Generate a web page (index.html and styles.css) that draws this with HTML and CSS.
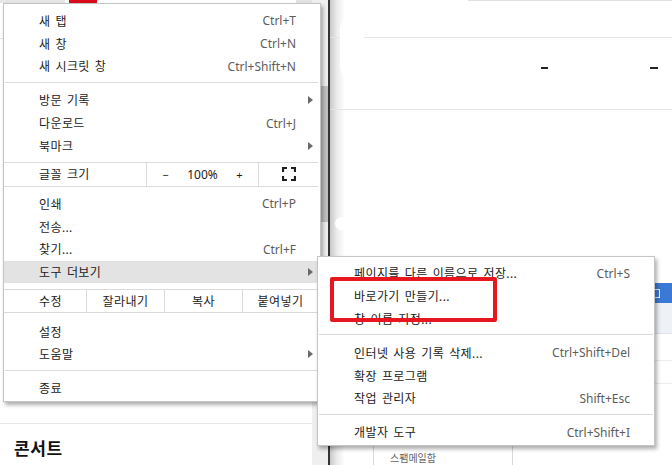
FILE: index.html
```html
<!DOCTYPE html>
<html lang="ko">
<head>
<meta charset="utf-8">
<title>Chrome menu</title>
<link rel="stylesheet" href="styles.css">
</head>
<body>
<div class="page">
  <div class="left">
    <div class="tabbar"><span class="tb-gray"></span><span class="tb-red"></span><span class="tb-gray2"></span></div>
    <div class="lhead"></div>
    <div class="lbody"></div>
    <div class="lsection"><h2 class="concert">콘서트</h2></div>
  </div>
  <div class="scrollcol"><div class="thumb"></div></div>
  <div class="divider"></div>
  <div class="right">
    <div class="blob blob1"></div>
    <div class="blob blob2"></div>
    <div class="rhead"><div class="topline"></div></div>
    <div class="rband"><span class="mark m1"></span><span class="mark m2"></span></div>
    <div class="rmid">
      <div class="bluerow"><div class="bluebtn"><span class="btnglyph"></span></div></div>
      <div class="lightrow"></div>
      <div class="trow t1"></div>
      <div class="trow t2"></div>
    </div>
    <div class="rfoot"><div class="fcell">스팸메일함</div></div>
  </div>
</div>

<div class="menu main">
  <div class="item"><span class="label">새 탭</span><span class="key">Ctrl+T</span><span class="arr"></span></div>
  <div class="item"><span class="label">새 창</span><span class="key">Ctrl+N</span><span class="arr"></span></div>
  <div class="item"><span class="label">새 시크릿 창</span><span class="key">Ctrl+Shift+N</span><span class="arr"></span></div>
  <div class="sep"></div>
  <div class="item"><span class="label">방문 기록</span><span class="arr on"></span></div>
  <div class="item"><span class="label">다운로드</span><span class="key">Ctrl+J</span><span class="arr"></span></div>
  <div class="item"><span class="label">북마크</span><span class="arr on"></span></div>
  <div class="zoomrow">
    <div class="zc zlab">글꼴 크기</div>
    <div class="zc zctl"><span class="zb">−</span><span class="zpct">100%</span><span class="zb">+</span></div>
    <div class="zc zfs">
      <svg width="14" height="14" viewBox="0 0 14 14"><path d="M1 5V1H5M9 1H13V5M13 9V13H9M5 13H1V9" fill="none" stroke="#1e1e1e" stroke-width="2.2"/></svg>
    </div>
  </div>
  <div class="item"><span class="label">인쇄</span><span class="key">Ctrl+P</span><span class="arr"></span></div>
  <div class="item"><span class="label">전송...</span><span class="arr"></span></div>
  <div class="item"><span class="label">찾기...</span><span class="key">Ctrl+F</span><span class="arr"></span></div>
  <div class="item hl"><span class="label">도구 더보기</span><span class="arr on"></span></div>
  <div class="editrow">
    <div class="ec elab">수정</div>
    <div class="ec">잘라내기</div>
    <div class="ec">복사</div>
    <div class="ec">붙여넣기</div>
  </div>
  <div class="item"><span class="label">설정</span><span class="arr"></span></div>
  <div class="item"><span class="label">도움말</span><span class="arr on"></span></div>
  <div class="sep"></div>
  <div class="item"><span class="label">종료</span><span class="arr"></span></div>
</div>

<div class="menu sub">
  <div class="item"><span class="label">페이지를 다른 이름으로 저장...</span><span class="key">Ctrl+S</span><span class="arr"></span></div>
  <div class="item"><span class="label">바로가기 만들기...</span><span class="arr"></span></div>
  <div class="item"><span class="label">창 이름 지정...</span><span class="arr"></span></div>
  <div class="sep"></div>
  <div class="item"><span class="label">인터넷 사용 기록 삭제...</span><span class="key">Ctrl+Shift+Del</span><span class="arr"></span></div>
  <div class="item"><span class="label">확장 프로그램</span><span class="arr"></span></div>
  <div class="item"><span class="label">작업 관리자</span><span class="key">Shift+Esc</span><span class="arr"></span></div>
  <div class="sep"></div>
  <div class="item"><span class="label">개발자 도구</span><span class="key">Ctrl+Shift+I</span><span class="arr"></span></div>
</div>

<div class="annot"></div>
</body>
</html>
```

FILE: styles.css
```css
html, body {
  margin: 0;
  padding: 0;
  background: #fff;
}

body {
  width: 672px;
  height: 465px;
  overflow: hidden;
  position: relative;
  font-family: "Noto Sans", "Noto Sans CJK KR", sans-serif;
}

.page {
  display: flex;
  width: 672px;
  height: 465px;
}

/* left page area */
.left {
  width: 312px;
  display: flex;
  flex-direction: column;
}

.tabbar {
  height: 3px;
  display: flex;
}

.tb-gray {
  width: 65px;
  background: #e6e6e6;
}

.tb-red {
  width: 28px;
  margin-left: 4px;
  background: #d90a1c;
}

.tb-gray2 {
  width: 16px;
  margin-left: auto;
  background: #e2e2e2;
}

.lhead {
  height: 35px;
  border-bottom: 1px solid #e3e3e3;
}

.lbody {
  flex: 1;
}

.lsection {
  height: 42px;
  box-sizing: border-box;
  border-top: 1px solid #e8e8e8;
  padding: 11px 0 0 14px;
}

.concert {
  margin: 0;
  font-family: "Noto Sans CJK KR", sans-serif;
  font-size: 17px;
  font-weight: bold;
  line-height: 26px;
  letter-spacing: 0.6px;
  color: #111;
}

/* scrollbar column + window divider */
.scrollcol {
  width: 16px;
  background: #efefef;
  padding-top: 86px;
  box-sizing: border-box;
}

.thumb {
  margin-left: 9px;
  width: 7px;
  height: 136px;
  background: #c0c0c0;
}

.divider {
  width: 2px;
  background: #333;
}

/* right page area */
.right {
  flex: 1;
  position: relative;
  display: flex;
  flex-direction: column;
  background: linear-gradient(to right, #c8c8c8 0, #ececec 7px, #fff 15px);
}

.blob {
  position: absolute;
  background: #fff;
}

.blob1 {
  left: 10px;
  top: 17px;
  width: 24px;
  height: 63px;
  border-radius: 12px 4px 4px 14px;
}

.blob2 {
  left: 5px;
  top: 217px;
  width: 30px;
  height: 13px;
  border-radius: 7px 2px 2px 7px;
}

.rhead {
  height: 38px;
  box-sizing: border-box;
  border-bottom: 1px solid #e4e4e4;
}

.topline {
  margin-left: 138px;
  border-top: 1px solid #e0e0e0;
}

.rband {
  height: 72px;
  box-sizing: border-box;
  border-bottom: 1px solid #e4e4e4;
  position: relative;
}

.mark {
  position: absolute;
  top: 29px;
  height: 2px;
  background: #222;
}

.m1 {
  left: 211px;
  width: 7px;
}

.m2 {
  left: 320px;
  width: 8px;
}

.rmid {
  padding-top: 173px;
}

.bluerow {
  display: flex;
  justify-content: flex-end;
  height: 20px;
}

.bluebtn {
  width: 60px;
  background: #3a7ad6;
  display: flex;
  align-items: center;
  justify-content: flex-end;
  padding-right: 12px;
  box-sizing: border-box;
}

.btnglyph {
  width: 4px;
  height: 7px;
  border: 1px solid #e8efff;
  border-left: none;
}

.lightrow {
  height: 31px;
  box-sizing: border-box;
  background: #eef1f6;
  border-bottom: 1px solid #dde1e8;
}

.trow {
  box-sizing: border-box;
  border-bottom: 1px solid #ececec;
}

.t1 {
  height: 27px;
}

.t2 {
  height: 23px;
}

.rfoot {
  margin-top: auto;
  height: 19px;
  padding-left: 43px;
}

.fcell {
  width: 140px;
  height: 19px;
  box-sizing: border-box;
  border-left: 1px solid #d8d8d8;
  border-right: 1px solid #d8d8d8;
  padding: 5px 0 0 16px;
  font-family: "Noto Sans CJK KR", sans-serif;
  font-size: 10px;
  line-height: 14px;
  color: #666;
}

/* menus */
.menu {
  position: absolute;
  box-sizing: border-box;
  background: #fff;
  border: 1px solid #c4c4c4;
  box-shadow: 2px 3px 4px rgba(0, 0, 0, 0.32);
  font-family: "Noto Sans", "Noto Sans CJK KR", sans-serif;
  font-size: 12px;
  color: #1b1b1b;
}

.main {
  left: 3px;
  top: 3px;
  width: 318px;
  padding: 5.5px 0 1px;
}

.sub {
  left: 317px;
  top: 256px;
  width: 338px;
  padding: 5px 0 1px;
}

.item {
  height: 22.7px;
  display: flex;
  align-items: center;
  padding: 0 7px 0 35px;
  white-space: nowrap;
}

.sub .item {
  padding-left: 36px;
}

.item.hl {
  background: #e3e3e3;
}

.label {
  flex: 1;
  letter-spacing: 0.4px;
  word-spacing: 1.5px;
}

.key {
  color: #5c5c5c;
}

.arr {
  width: 5px;
  height: 8px;
  margin-left: 12px;
  box-sizing: border-box;
}

.arr.on {
  width: 0;
  height: 0;
  border-left: 5px solid #6a6a6a;
  border-top: 4px solid transparent;
  border-bottom: 4px solid transparent;
}

.sep {
  height: 1px;
  background: #dadada;
  margin: 4px 2px 6.5px 1px;
}

.sub .sep {
  margin: 4px 1px 6.5px 1px;
}

.zoomrow {
  display: grid;
  grid-template-columns: 143px 112px 1fr;
  height: 25px;
  box-sizing: border-box;
  margin: 4.5px 2px 6px 0;
  border-top: 1px solid #dadada;
  border-bottom: 1px solid #dadada;
}

.zc {
  display: flex;
  align-items: center;
  box-sizing: border-box;
}

.zlab {
  padding-left: 35px;
  letter-spacing: 0.4px;
  word-spacing: 1.5px;
  border-right: 1px solid #dadada;
}

.zctl {
  justify-content: center;
  border-right: 1px solid #dadada;
}

.zb {
  width: 36px;
  text-align: center;
  font-size: 11px;
}

.zpct {
  width: 38px;
  text-align: center;
}

.zfs {
  justify-content: center;
}

.zfs svg {
  display: block;
}

.editrow {
  display: grid;
  grid-template-columns: 83px 78px 78px 1fr;
  height: 24px;
  box-sizing: border-box;
  margin: 5.5px 2px 7.3px 0;
  border-top: 1px solid #dadada;
  border-bottom: 1px solid #dadada;
}

.ec {
  display: flex;
  align-items: center;
  justify-content: center;
  box-sizing: border-box;
  letter-spacing: 0.4px;
  border-right: 1px solid #dadada;
}

.ec:last-child {
  border-right: none;
}

.ec.elab {
  justify-content: flex-start;
  padding-left: 35px;
}

/* screenshot annotation */
.annot {
  position: absolute;
  left: 330px;
  top: 277px;
  width: 167px;
  height: 45px;
  box-sizing: border-box;
  border: 4px solid #e8171f;
  border-radius: 2px;
}
```
